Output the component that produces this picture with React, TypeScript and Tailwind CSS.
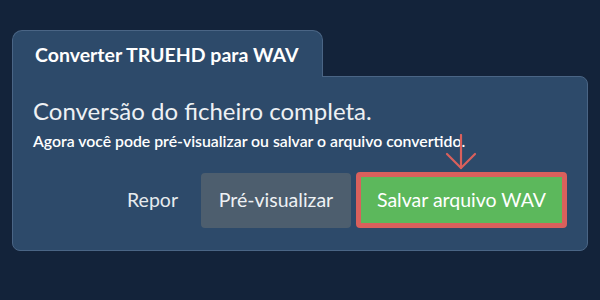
import React from 'react';

export default function App() {
  return (
    <div
      className="w-[600px] h-[300px] bg-[#13233a] px-[12px] pt-[30px] overflow-hidden"
      style={{ fontFamily: 'Lato, "Noto Sans", sans-serif' }}
    >
      {/* Tab */}
      <div className="relative z-10 -mb-px w-[311px] h-[47px] bg-[#2d4a6a] border border-b-0 border-[#4a6585] rounded-t-[10px] pl-[22px] pt-[12px]">
        <span className="text-[19.5px] font-bold text-white leading-[24px]">Converter TRUEHD para WAV</span>
      </div>

      {/* Panel */}
      <div className="relative w-[576px] h-[175px] bg-[#2d4a6a] border border-[#4a6585] rounded-b-[8px] rounded-tr-[8px] px-[20px] pt-[19px]">
        <h1 className="text-[24px] leading-[30px] text-[#eef1f4] font-normal">Conversão do ficheiro completa.</h1>
        <p className="mt-[5px] text-[15.8px] leading-[20px] font-semibold text-white">
          Agora você pode pré-visualizar ou salvar o arquivo convertido.
        </p>

        <div className="flex items-center justify-end gap-[5px] mt-[21px]">
          <button className="text-[19.5px] text-[#e6eaee] pl-[22px] pr-[18px] h-[56px]">Repor</button>
          <button className="w-[150px] h-[55px] rounded-[4px] bg-[#4d5e6e] text-[19.5px] text-[#eef1f4]">
            Pré-visualizar
          </button>
          <button className="relative w-[211px] h-[56px] rounded-[4px] bg-[#5cb85c] border-[5px] border-[#d9605c] text-[19.5px] text-white">
            Salvar arquivo WAV
            <svg
              className="absolute left-[84px] -top-[43px]"
              width="32"
              height="36"
              viewBox="0 0 32 36"
              fill="none"
              stroke="#d9605c"
              strokeWidth="2.2"
              strokeLinecap="round"
            >
              <line x1="16" y1="1" x2="16" y2="34" />
              <polyline points="2,20 16,34 30,20" />
            </svg>
          </button>
        </div>
      </div>
    </div>
  );
}
